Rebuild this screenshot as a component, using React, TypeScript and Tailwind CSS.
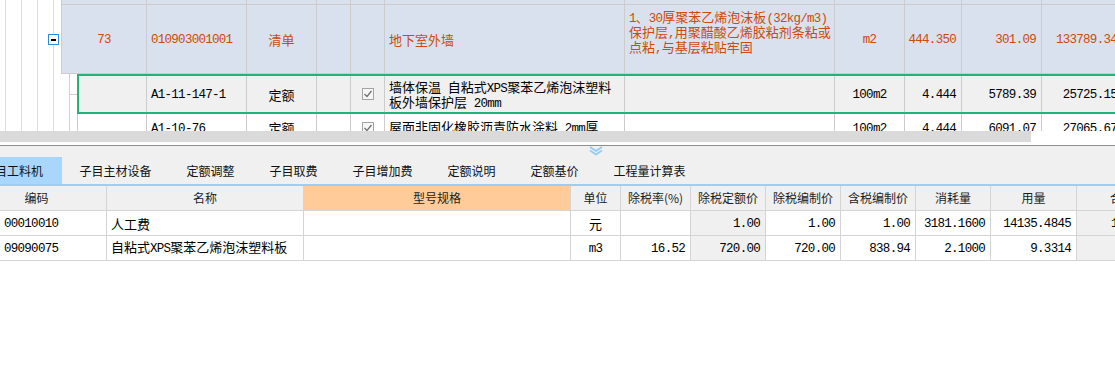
import React from "react";

const RUNS = /[\x00-\x7f]+|[^\x00-\x7f]+/g;

function T({ s }: { s: string }) {
  const parts = s.match(RUNS) || [];
  return (
    <span className="whitespace-nowrap">
      {parts.map((p, i) =>
        /^[\x00-\x7f]+$/.test(p) ? (
          <span key={i} className="font-['Liberation_Mono',monospace] text-[12.5px] tracking-[-0.72px] whitespace-pre">
            {p}
          </span>
        ) : (
          <span key={i} className="font-['Noto_Sans_CJK_SC',sans-serif] text-[13px]">
            {p}
          </span>
        )
      )}
    </span>
  );
}

function Check() {
  return (
    <div className="w-[12px] h-[12px] border border-[#a3a3a3] bg-[#f7f7f7] flex items-center justify-center">
      <svg width="10" height="10" viewBox="0 0 10 10">
        <polyline points="1.5,5 4,7.5 8.5,2" fill="none" stroke="#707070" strokeWidth="1.3" />
      </svg>
    </div>
  );
}

const tc = "h-full shrink-0 border-r border-[#cccccc] flex items-center overflow-hidden whitespace-nowrap leading-[15px]";
const lc = "h-full shrink-0 border-r border-[#d4d4d4] flex items-center overflow-hidden whitespace-nowrap leading-[15px]";
const hc = "h-full shrink-0 border-r border-[#d4d4d4] flex items-center justify-center overflow-hidden whitespace-nowrap font-['Noto_Sans_CJK_SC',sans-serif] text-[12px] text-[#1c1c1c]";
const tab = "h-[27px] px-[17.5px] flex items-center whitespace-nowrap";

export default function App() {
  return (
    <div className="w-[1115px] h-[367px] overflow-hidden bg-white relative text-black">
      {/* ===== upper grid ===== */}
      <div className="h-[131px] flex items-start overflow-hidden relative">
        <div className="w-[61px] h-[131px] shrink-0 flex">
          <div className="w-[6px] h-full border-r border-[#dcdcdc]" />
          <div className="w-[16px] h-full border-r border-[#dcdcdc]" />
          <div className="w-[16px] h-full border-r border-[#dcdcdc]" />
          <div className="w-[16px] h-full border-r border-[#dcdcdc]" />
        </div>

        <div className="flex flex-col shrink-0">
          {/* header sliver */}
          <div className="h-[5px] shrink-0 flex bg-[#d8e1ed] border-l border-b border-[#cccccc]">
            <div className={`${tc} w-[85px]`} />
            <div className={`${tc} w-[100px]`} />
            <div className={`${tc} w-[70px]`} />
            <div className={`${tc} w-[34px]`} />
            <div className={`${tc} w-[34px]`} />
            <div className={`${tc} w-[240px]`} />
            <div className={`${tc} w-[210px]`} />
            <div className={`${tc} w-[70px]`} />
            <div className={`${tc} w-[57px]`} />
            <div className={`${tc} w-[80px]`} />
            <div className={`${tc} w-[81px]`} />
          </div>

          {/* row 73 */}
          <div className="h-[69px] shrink-0 flex bg-[#d8e1ed] border-l border-b border-[#cccccc] text-[#cc4a0b]">
            <div className={`${tc} w-[85px] justify-center`}><T s="73" /></div>
            <div className={`${tc} w-[100px] pl-[4px]`}><T s="010903001001" /></div>
            <div className={`${tc} w-[70px] justify-center`}><T s="清单" /></div>
            <div className={`${tc} w-[34px]`} />
            <div className={`${tc} w-[34px]`} />
            <div className={`${tc} w-[240px] pl-[4px]`}><T s="地下室外墙" /></div>
            <div className={`${tc} w-[210px] pl-[4px] pt-[4px] items-start`}>
              <div className="flex flex-col">
                <div className="h-[15px]"><T s="1、30厚聚苯乙烯泡沫板(32kg/m3)" /></div>
                <div className="h-[15px]"><T s="保护层,用聚醋酸乙烯胶粘剂条粘或" /></div>
                <div className="h-[15px]"><T s="点粘,与基层粘贴牢固" /></div>
              </div>
            </div>
            <div className={`${tc} w-[70px] justify-center`}><T s="m2" /></div>
            <div className={`${tc} w-[57px] justify-end pr-[5px]`}><T s="444.350" /></div>
            <div className={`${tc} w-[80px] justify-end pr-[5px]`}><T s="301.09" /></div>
            <div className={`${tc} w-[81px] justify-end pr-[5px]`}><T s="133789.34" /></div>
          </div>

          {/* row A1-11-147-1 (selected) */}
          <div className="h-[40px] shrink-0 flex">
            <div className="w-[16px] h-full shrink-0 flex">
              <div className="w-[8px] h-full" />
              <div className="w-[8px] h-full border-l border-[#d0d0d0]">
                <div className="h-[21px] border-b border-[#d0d0d0]" />
              </div>
            </div>
            <div className="h-full flex border-2 border-r-0 border-[#22b27a] bg-[#f0f0f0]">
              <div className={`${tc} w-[68px]`} />
              <div className={`${tc} w-[100px] pl-[4px]`}><T s="A1-11-147-1" /></div>
              <div className={`${tc} w-[70px] justify-center`}><T s="定额" /></div>
              <div className={`${tc} w-[34px]`} />
              <div className={`${tc} w-[34px] justify-center`}><Check /></div>
              <div className={`${tc} w-[240px] pl-[4px]`}>
                <div className="flex flex-col">
                  <div className="h-[15px]"><T s="墙体保温 自粘式XPS聚苯乙烯泡沫塑料" /></div>
                  <div className="h-[15px]"><T s="板外墙保护层 20mm" /></div>
                </div>
              </div>
              <div className={`${tc} w-[210px]`} />
              <div className={`${tc} w-[70px] justify-center`}><T s="100m2" /></div>
              <div className={`${tc} w-[57px] justify-end pr-[5px]`}><T s="4.444" /></div>
              <div className={`${tc} w-[80px] justify-end pr-[5px]`}><T s="5789.39" /></div>
              <div className={`${tc} w-[81px] justify-end pr-[5px]`}><T s="25725.15" /></div>
            </div>
          </div>

          {/* row A1-10-76 */}
          <div className="h-[27px] shrink-0 flex">
            <div className="w-[16px] h-full shrink-0 flex">
              <div className="w-[8px] h-full" />
              <div className="w-[8px] h-full border-l border-[#d0d0d0]" />
            </div>
            <div className="h-full flex border-l border-[#cccccc] bg-white">
              <div className={`${tc} w-[69px]`} />
              <div className={`${tc} w-[100px] pl-[4px]`}><T s="A1-10-76" /></div>
              <div className={`${tc} w-[70px] justify-center`}><T s="定额" /></div>
              <div className={`${tc} w-[34px]`} />
              <div className={`${tc} w-[34px] justify-center`}><Check /></div>
              <div className={`${tc} w-[240px] pl-[4px]`}><T s="屋面非固化橡胶沥青防水涂料 2mm厚" /></div>
              <div className={`${tc} w-[210px]`} />
              <div className={`${tc} w-[70px] justify-center`}><T s="100m2" /></div>
              <div className={`${tc} w-[57px] justify-end pr-[5px]`}><T s="4.444" /></div>
              <div className={`${tc} w-[80px] justify-end pr-[5px]`}><T s="6091.07" /></div>
              <div className={`${tc} w-[81px] justify-end pr-[5px]`}><T s="27065.67" /></div>
            </div>
          </div>
        </div>

        {/* collapse box */}
        <div className="absolute left-[48px] top-[34px] w-[11px] h-[11px] border border-[#2a8fe0] bg-white flex items-center justify-center">
          <div className="w-[5px] h-[2px] bg-black" />
        </div>
      </div>

      {/* scrollbar */}
      <div className="h-[11px] flex">
        <div className="w-[1031px] h-full bg-[#dadada]" />
      </div>
      <div className="h-[3px]" />
      <div className="h-px bg-[#8e8e8e]" />

      {/* tabs */}
      <div className="h-[38px] bg-[#f0f0f0] flex items-end relative font-['Noto_Sans_CJK_SC',sans-serif] text-[12px] text-[#111]">
        <div className="w-[62px] h-[27px] shrink-0 flex items-center justify-end pr-[19px] bg-[#a8d6fc] whitespace-nowrap">
          子目工料机
        </div>
        <div className={tab}>子目主材设备</div>
        <div className={tab}>定额调整</div>
        <div className={tab}>子目取费</div>
        <div className={tab}>子目增加费</div>
        <div className={tab}>定额说明</div>
        <div className={tab}>定额基价</div>
        <div className={tab}>工程量计算表</div>
        <svg className="absolute left-[588px] top-0" width="16" height="10" viewBox="0 0 16 10">
          <polyline points="2,1 8,5 14,1" fill="none" stroke="#8fcaf2" strokeWidth="1.6" />
          <polyline points="2,4.5 8,8.5 14,4.5" fill="none" stroke="#8fcaf2" strokeWidth="1.6" />
        </svg>
      </div>
      <div className="h-[2px] bg-[#9ccdf2]" />

      {/* lower header */}
      <div className="h-[25px] flex bg-[#f0f0f0] border-b border-[#d4d4d4]">
        <div className={`${hc} w-[107px] pr-[33px]`}>编码</div>
        <div className={`${hc} w-[197px]`}>名称</div>
        <div className={`${hc} w-[267px] bg-[#ffcc99]`}>型号规格</div>
        <div className={`${hc} w-[50px]`}>单位</div>
        <div className={`${hc} w-[70px]`}>除税率(%)</div>
        <div className={`${hc} w-[75px]`}>除税定额价</div>
        <div className={`${hc} w-[75px]`}>除税编制价</div>
        <div className={`${hc} w-[75px]`}>含税编制价</div>
        <div className={`${hc} w-[75px]`}>消耗量</div>
        <div className={`${hc} w-[86px]`}>用量</div>
        <div className={`${hc} w-[80px] justify-start pl-[33px]`}>合价</div>
      </div>

      {/* lower rows */}
      <div className="h-[25px] flex border-b border-[#d4d4d4]">
        <div className={`${lc} w-[107px] pl-[4px]`}><T s="00010010" /></div>
        <div className={`${lc} w-[197px] pl-[4px]`}><T s="人工费" /></div>
        <div className={`${lc} w-[267px]`} />
        <div className={`${lc} w-[50px] justify-center`}><T s="元" /></div>
        <div className={`${lc} w-[70px] justify-end pr-[5px]`} />
        <div className={`${lc} w-[75px] justify-end pr-[5px] bg-[#f0f0f0]`}><T s="1.00" /></div>
        <div className={`${lc} w-[75px] justify-end pr-[5px]`}><T s="1.00" /></div>
        <div className={`${lc} w-[75px] justify-end pr-[5px]`}><T s="1.00" /></div>
        <div className={`${lc} w-[75px] justify-end pr-[5px]`}><T s="3181.1600" /></div>
        <div className={`${lc} w-[86px] justify-end pr-[5px]`}><T s="14135.4845" /></div>
        <div className={`${lc} w-[80px] pl-[34px] bg-[#f0f0f0]`}><T s="14135.48" /></div>
      </div>
      <div className="h-[25px] flex border-b border-[#d4d4d4]">
        <div className={`${lc} w-[107px] pl-[4px]`}><T s="09090075" /></div>
        <div className={`${lc} w-[197px] pl-[4px]`}><T s="自粘式XPS聚苯乙烯泡沫塑料板" /></div>
        <div className={`${lc} w-[267px]`} />
        <div className={`${lc} w-[50px] justify-center`}><T s="m3" /></div>
        <div className={`${lc} w-[70px] justify-end pr-[5px]`}><T s="16.52" /></div>
        <div className={`${lc} w-[75px] justify-end pr-[5px] bg-[#f0f0f0]`}><T s="720.00" /></div>
        <div className={`${lc} w-[75px] justify-end pr-[5px]`}><T s="720.00" /></div>
        <div className={`${lc} w-[75px] justify-end pr-[5px]`}><T s="838.94" /></div>
        <div className={`${lc} w-[75px] justify-end pr-[5px]`}><T s="2.1000" /></div>
        <div className={`${lc} w-[86px] justify-end pr-[5px]`}><T s="9.3314" /></div>
        <div className={`${lc} w-[80px] pl-[44px] bg-[#f0f0f0]`}><T s="6719.57" /></div>
      </div>
    </div>
  );
}
